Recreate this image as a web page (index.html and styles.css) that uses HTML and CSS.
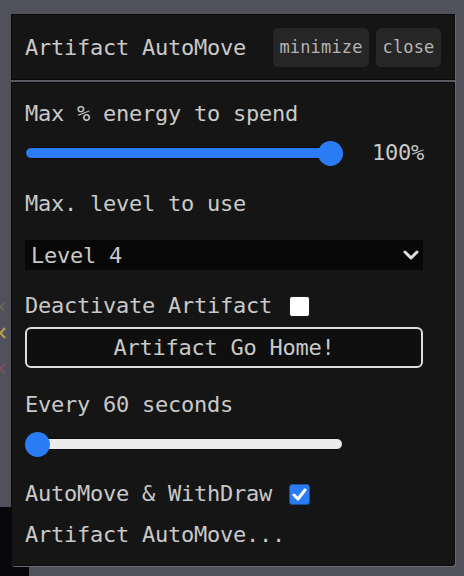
FILE: index.html
```html
<!DOCTYPE html>
<html>
<head>
<meta charset="utf-8">
<link rel="stylesheet" href="styles.css">
</head>
<body>
<div class="backdrop">
  <svg class="deco deco-y1" width="6" height="10" viewBox="0 0 6 10"><path d="M-3 1 L4 9 M4 1 L-3 9" stroke="#6f6a52" stroke-width="1.5" fill="none"/></svg>
  <svg class="deco deco-y2" width="6" height="12" viewBox="0 0 6 12"><path d="M-4 1 L5 11 M5 1 L-4 11" stroke="#b8a048" stroke-width="2" fill="none"/></svg>
  <svg class="deco deco-r" width="6" height="12" viewBox="0 0 6 12"><path d="M-4 1 L5 11 M5 1 L-4 11" stroke="#76525e" stroke-width="2" fill="none"/></svg>
  <div class="dark-block"></div>
</div>
<div class="panel">
  <div class="header">
    <div class="title">Artifact AutoMove</div>
    <div class="actions">
      <button class="hbtn">minimize</button>
      <button class="hbtn">close</button>
    </div>
  </div>
  <div class="body">
    <div class="label l1">Max % energy to spend</div>
    <div class="slider-row r1">
      <div class="range full"><div class="thumb thumb-end"></div></div>
      <span class="value">100%</span>
    </div>
    <div class="label l2">Max. level to use</div>
    <div class="select-wrap">
      <select class="select"><option>Level 4</option></select>
      <svg class="chev" width="16" height="10" viewBox="0 0 16 10"><path d="M2 2 L8 8 L14 2" fill="none" stroke="#e0e0e0" stroke-width="3" stroke-linecap="round" stroke-linejoin="round"/></svg>
    </div>
    <div class="label check-row l3">Deactivate Artifact <span class="box"></span></div>
    <button class="home">Artifact Go Home!</button>
    <div class="label l4">Every 60 seconds</div>
    <div class="slider-row r2">
      <div class="range empty"><div class="thumb thumb-start"></div></div>
    </div>
    <div class="label check-row l5">AutoMove &amp; WithDraw <span class="box checked"><svg width="15" height="13" viewBox="0 0 15 13"><path d="M2 7 L6 11 L13 2" fill="none" stroke="#fff" stroke-width="3" stroke-linecap="round" stroke-linejoin="round"/></svg></span></div>
    <div class="label l6">Artifact AutoMove...</div>
  </div>
</div>
</body>
</html>
```
FILE: styles.css
```css
html, body {
  margin: 0;
  padding: 0;
}
body {
  background: #51515b;
  width: 464px;
  height: 576px;
  overflow: hidden;
  position: relative;
  font-family: "DejaVu Sans Mono", "Liberation Mono", monospace;
  color: #c9c9c9;
}
.backdrop .deco {
  position: absolute;
  left: 0;
}
.deco-y1 { top: 302px; }
.deco-y2 { top: 327px; }
.deco-r { top: 363px; }
.dark-block {
  position: absolute;
  left: 0;
  top: 507px;
  width: 29px;
  height: 69px;
  background: #08080c;
}
.panel {
  position: relative;
  margin: 14px 0 0 11px;
  width: 444px;
  display: flex;
  flex-direction: column;
  gap: 2px;
  background: #5a5a62;
  box-shadow: 1px 1px 0 #6a6a72;
  border-radius: 0 0 3px 3px;
}
.header {
  height: 64px;
  background: #151515;
  border: 1px solid #0a0a0a;
  display: flex;
  align-items: center;
  justify-content: space-between;
  padding: 0 13px 0 13px;
}
.title {
  font-size: 22px;
  letter-spacing: -0.25px;
  line-height: 26px;
  padding-top: 1px;
}
.actions {
  display: flex;
  gap: 7px;
}
.hbtn {
  font-family: "DejaVu Sans Mono", monospace;
  font-size: 17px;
  letter-spacing: 0.15px;
  color: #b5b5b5;
  background: #262626;
  border: none;
  border-radius: 5px;
  height: 39px;
  padding: 0 6.5px;
  margin: 0;
}
.body {
  background: #151515;
  border: 1px solid #0a0a0a;
  border-radius: 0 0 3px 3px;
  padding: 18px 13px 17px 13px;
  display: flex;
  flex-direction: column;
}
.label {
  font-size: 22px;
  letter-spacing: -0.25px;
  line-height: 26px;
  height: 26px;
  white-space: nowrap;
}
.l1 { margin-top: 0; }
.r1 { margin-top: 13px; }
.l2 { margin-top: 25px; }
.select-wrap { margin-top: 23px; }
.l3 { margin-top: 23px; }
.home { margin-top: 8px; }
.l4 { margin-top: 24px; }
.r2 { margin-top: 13px; }
.l5 { margin-top: 24px; }
.l6 { margin-top: 15px; }

.slider-row {
  display: flex;
  align-items: center;
  height: 26px;
  gap: 29px;
}
.range {
  position: relative;
  width: 318px;
  height: 12px;
  border-radius: 6px;
  border: 1px solid #0b0b0b;
  box-sizing: border-box;
}
.range.full { background: #2b7cf4; }
.range.empty { background: #ececec; }
.thumb {
  position: absolute;
  top: 50%;
  width: 25px;
  height: 25px;
  margin-top: -12.5px;
  border-radius: 50%;
  background: #2b7cf4;
}
.thumb-end { right: -1px; }
.thumb-start { left: -1px; }
.value {
  font-size: 22px;
  letter-spacing: -0.25px;
  line-height: 26px;
}
.select-wrap {
  position: relative;
  width: 398px;
  height: 30px;
}
.select {
  -webkit-appearance: none;
  appearance: none;
  width: 100%;
  height: 30px;
  background: #070707;
  color: #c9c9c9;
  border: none;
  border-radius: 0;
  font-family: "DejaVu Sans Mono", monospace;
  font-size: 22px;
  letter-spacing: -0.25px;
  padding: 0 0 0 6px;
  margin: 0;
  outline: none;
}
.chev {
  position: absolute;
  right: 4px;
  top: 10px;
}
.check-row {
  display: flex;
  align-items: center;
  gap: 4px;
  white-space: pre;
}
.box {
  width: 21px;
  height: 21px;
  box-sizing: border-box;
  border-radius: 3px;
  background: #ffffff;
  border: 1px solid #1a1a1a;
  display: inline-flex;
  align-items: center;
  justify-content: center;
}
.box.checked {
  background: #2b7cf4;
  border-color: #1b4f9a;
}
.home {
  width: 398px;
  height: 41px;
  box-sizing: border-box;
  border: 2px solid #dedede;
  border-radius: 6px;
  background: #0f0f0f;
  color: #c9c9c9;
  font-family: "DejaVu Sans Mono", monospace;
  font-size: 22px;
  letter-spacing: -0.25px;
  padding: 0;
}
```
